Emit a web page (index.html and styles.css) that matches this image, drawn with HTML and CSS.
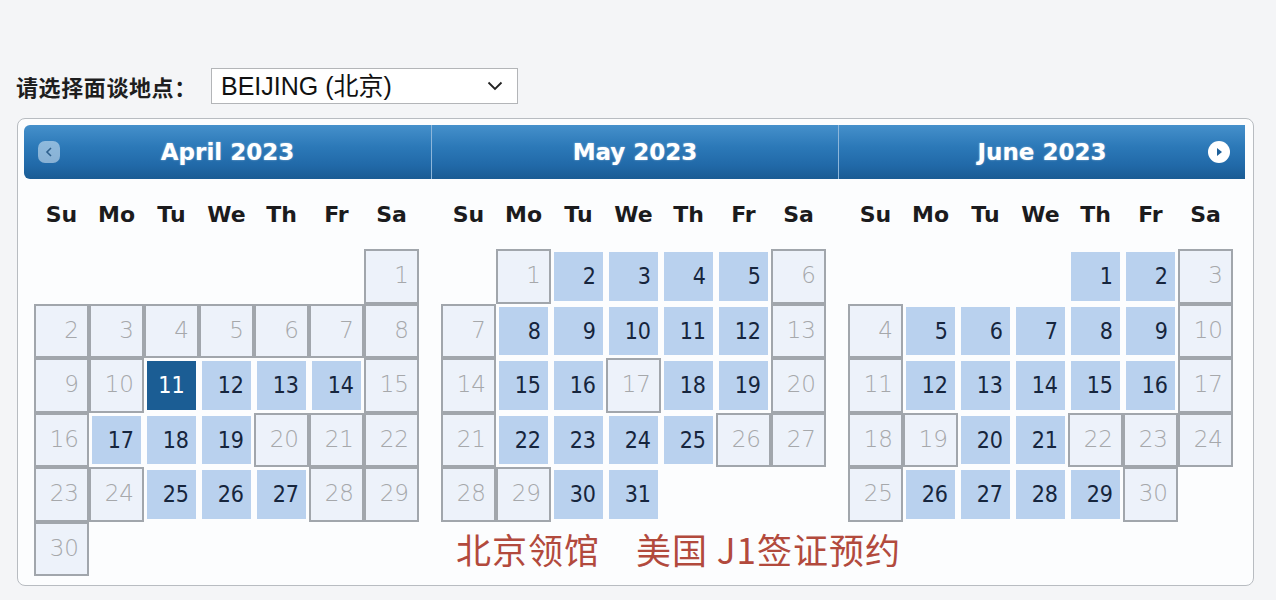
FILE: index.html
```
<!DOCTYPE html>
<html lang="zh-CN">

<head>
    <meta charset="UTF-8">
    <meta name="viewport" content="width=device-width, initial-scale=1.0">
    <title>面谈预约</title>
    <link rel="stylesheet" href="styles.css">
</head>

<body>
    <div class="post-row">
        <label for="post">请选择面谈地点：</label>
        <div class="select-wrap">
            <select id="post" class="post-select">
                <option value="beijing">BEIJING (北京)</option>
                <option value="shanghai">SHANGHAI (上海)</option>
                <option value="guangzhou">GUANGZHOU (广州)</option>
            </select>
            <svg class="chev" width="16" height="10" viewBox="0 0 16 10">
                <path d="M1.5 1.5 L8 8 L14.5 1.5" fill="none" stroke="#222" stroke-width="1.8" />
            </svg>
        </div>
    </div>

    <div class="cal" id="cal">
        <div class="note">北京领馆　美国 J1签证预约</div>
    </div>

    <script>
        // open = bookable days, sel = currently picked day
        const months = [
            { name: 'April 2023', first: 6, days: 30, open: [11, 12, 13, 14, 17, 18, 19, 25, 26, 27], sel: 11 },
            { name: 'May 2023', first: 1, days: 31, open: [2, 3, 4, 5, 8, 9, 10, 11, 12, 15, 16, 18, 19, 22, 23, 24, 25, 30, 31] },
            { name: 'June 2023', first: 4, days: 30, open: [1, 2, 5, 6, 7, 8, 9, 12, 13, 14, 15, 16, 20, 21, 26, 27, 28, 29] }
        ]
        const dayNames = ['Su', 'Mo', 'Tu', 'We', 'Th', 'Fr', 'Sa']
        const cal = document.getElementById('cal')
        const note = cal.querySelector('.note')

        months.forEach((m, i) => {
            const group = document.createElement('div')
            group.className = 'group'

            const title = document.createElement('div')
            title.className = 'title'
            title.textContent = m.name
            if (i === 0) {
                title.innerHTML += '<span class="prev"><svg width="8" height="10" viewBox="0 0 8 10"><path d="M6 1 L2 5 L6 9" fill="none" stroke="#2d5f8c" stroke-width="1.6"/></svg></span>'
            }
            if (i === months.length - 1) {
                title.innerHTML += '<span class="next"><svg width="8" height="10" viewBox="0 0 8 10"><path d="M2 1 L7 5 L2 9 Z" fill="#1d5f99"/></svg></span>'
            }
            group.appendChild(title)

            const table = document.createElement('table')
            let html = '<thead><tr>' + dayNames.map(d => `<th>${d}</th>`).join('') + '</tr></thead><tbody><tr>'
            for (let k = 0; k < m.first; k++) html += '<td></td>'
            let col = m.first
            for (let d = 1; d <= m.days; d++) {
                let cls = m.open.includes(d) ? 'open' : 'off'
                if (d === m.sel) cls = 'sel'
                html += `<td><span class="day ${cls}">${d}</span></td>`
                col++
                if (col === 7 && d < m.days) {
                    html += '</tr><tr>'
                    col = 0
                }
            }
            while (col < 7 && col !== 0) {
                html += '<td></td>'
                col++
            }
            html += '</tr></tbody>'
            table.innerHTML = html
            group.appendChild(table)

            cal.insertBefore(group, note)
        })
    </script>
</body>

</html>
```

FILE: styles.css
```
body {
    margin: 0;
    background-color: #f4f5f7;
    font-family: "DejaVu Sans", Verdana, sans-serif;
}

.post-row {
    display: flex;
    align-items: center;
    padding: 68px 0 0 16px;
    height: 36px;
}

.post-row label {
    font-family: "Noto Sans CJK SC", sans-serif;
    font-size: 22px;
    font-weight: bold;
    letter-spacing: 0.6px;
    color: #1e1e1e;
    width: 195px;
}

.select-wrap {
    position: relative;
    width: 307px;
    height: 36px;
}

.post-select {
    appearance: none;
    -webkit-appearance: none;
    width: 100%;
    height: 100%;
    box-sizing: border-box;
    border: 1px solid #b3b5b8;
    border-radius: 0;
    background: #fff;
    padding: 0 0 0 9px;
    font-family: "Liberation Sans", "Noto Sans CJK SC", sans-serif;
    font-size: 25px;
    color: #111;
}

.chev {
    position: absolute;
    right: 15px;
    top: 13px;
    pointer-events: none;
}

.cal {
    position: relative;
    display: flex;
    margin: 14px 0 0 17px;
    width: 1237px;
    box-sizing: border-box;
    padding: 6px 7px 9px 6px;
    border: 1px solid #b8bcc1;
    border-radius: 8px;
    background: #fcfdfe;
}

.group {
    width: 407px;
}

.title {
    position: relative;
    height: 54px;
    line-height: 54px;
    text-align: center;
    color: #fff;
    font-size: 23px;
    font-weight: bold;
    text-shadow: 0 0 2px rgba(255, 255, 255, 0.5);
    background: linear-gradient(#4590cb 0%, #2c79b8 40%, #2169a8 75%, #1a5c94 100%);
    border-left: 1px solid #8db6da;
}

.group:first-child .title {
    border-left: none;
    border-radius: 6px 0 0 6px;
}

.group:last-of-type .title {
    border-radius: 0 6px 6px 0;
}

.prev,
.next {
    position: absolute;
    top: 16px;
    width: 22px;
    height: 22px;
    display: flex;
    align-items: center;
    justify-content: center;
}

.prev {
    left: 14px;
    border-radius: 7px;
    background: rgba(220, 235, 248, 0.55);
}

.next {
    right: 15px;
    border-radius: 50%;
    background: #fff;
}

table {
    margin-left: 10px;
    border-collapse: separate;
    border-spacing: 0;
    table-layout: fixed;
    width: 385px;
}

th {
    height: 70px;
    padding: 0;
    font-size: 22px;
    font-weight: bold;
    color: #1b1b1d;
}

td {
    width: 55px;
    height: 54.5px;
    padding: 0;
}

.day {
    display: block;
    height: 54.5px;
    box-sizing: border-box;
    text-align: right;
    line-height: 49px;
    font-size: 23px;
    font-stretch: 87.5%;
}

.off {
    border: 2px solid #a1a6ac;
    padding-right: 8px;
    background: #edf2fa;
    color: #a6a8ab;
    font-weight: 200;
}

.open,
.sel {
    border: 3px solid #fcfdfe;
    padding-right: 7px;
    line-height: 48px;
    background: #b9d1ee;
    color: #16253d;
}

.sel {
    background: #1b5d94;
    color: #fff;
    text-align: center;
    padding-right: 0;
}

.note {
    position: absolute;
    left: 438px;
    top: 412px;
    font-family: "Noto Sans CJK SC", sans-serif;
    font-size: 35px;
    line-height: 35px;
    letter-spacing: 1px;
    color: #b24a3d;
    white-space: nowrap;
}
```
